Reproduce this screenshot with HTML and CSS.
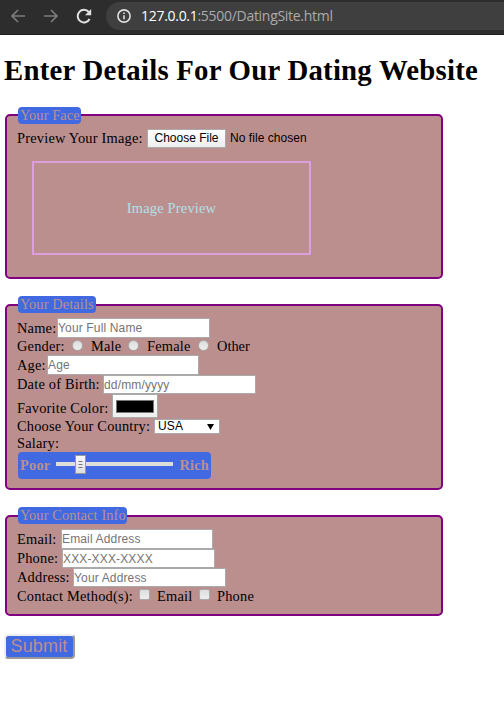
FILE: index.html
```html
<!DOCTYPE html>
<html lang="en">
<head>
<meta charset="utf-8">
<title>Dating Site</title>
<link rel="stylesheet" href="styles.css">
</head>
<body>
<header class="toolbar">
  <svg class="nav dim" viewBox="0 0 16 16"><path d="M15 8H2M8 2L2 8l6 6"/></svg>
  <svg class="nav dim" viewBox="0 0 16 16"><path d="M1 8h13M8 2l6 6-6 6"/></svg>
  <svg class="nav" viewBox="0 0 16 16"><path d="M13.6 11A6.3 6.3 0 1 1 12.8 4"/><path class="solid" d="M15.2 1v6.2H9z"/></svg>
  <div class="address">
    <svg class="info" viewBox="0 0 14 14"><circle cx="7" cy="7" r="6.1"/><path d="M7 6.2v4M7 3.4v1.6"/></svg>
    <span class="url"><b>127.0.0.1</b>:5500/DatingSite.html</span>
  </div>
</header>
<main>
  <h1>Enter Details For Our Dating Website</h1>
  <form>
    <section class="group face">
      <h2 class="legend w-face">Your Face</h2>
      <div class="row file"><span class="label l-file">Preview Your Image:</span><button type="button" class="choose">Choose File</button><span class="nofile">No file chosen</span></div>
      <div class="preview">Image Preview</div>
    </section>
    <section class="group details">
      <h2 class="legend w-details">Your Details</h2>
      <div class="row tall"><label class="label l-name">Name:</label><input class="text" placeholder="Your Full Name"></div>
      <div class="row short"><span class="label l-gender">Gender:</span><input type="radio" class="radio"><span class="label l-male">Male</span><input type="radio" class="radio"><span class="label l-female">Female</span><input type="radio" class="radio"><span class="other">Other</span></div>
      <div class="row tall"><label class="label l-age">Age:</label><input class="text narrow" placeholder="Age"></div>
      <div class="row field"><label class="label l-dob">Date of Birth:</label><input class="text" placeholder="dd/mm/yyyy"></div>
      <div class="row color"><label class="label l-color">Favorite Color:</label><span class="well"><i class="swatch"></i></span></div>
      <div class="row short"><label class="label l-country">Choose Your Country:</label><span class="select">USA<svg viewBox="0 0 8 7"><path d="M0 0h8L4 7z"/></svg></span></div>
      <div class="row short">Salary:</div>
      <div class="salary"><span>Poor</span><span class="track"><i class="thumb"><svg viewBox="0 0 9 17"><path d="M2.5 5.5h4M2.5 8.5h4M2.5 11.5h4"/></svg></i></span><span>Rich</span></div>
    </section>
    <section class="group contact">
      <h2 class="legend w-contact">Your Contact Info</h2>
      <div class="row tall"><label class="label l-email">Email:</label><input class="text narrow" placeholder="Email Address"></div>
      <div class="row field"><label class="label l-phone">Phone:</label><input class="text" placeholder="XXX-XXX-XXXX"></div>
      <div class="row field"><label class="label l-address">Address:</label><input class="text" placeholder="Your Address"></div>
      <div class="row methods"><span class="label l-method">Contact Method(s):</span><input type="checkbox" class="check"><span class="label l-cemail">Email</span><input type="checkbox" class="check"><span>Phone</span></div>
    </section>
    <button type="button" class="submit">Submit</button>
  </form>
</main>
</body>
</html>
```
FILE: styles.css
```css
* { box-sizing: border-box; }
body {
  margin: 0;
  background: #fff;
  color: #000;
  font: 14.4px/17px "Liberation Serif", serif;
  overflow: hidden;
}
.toolbar {
  height: 35px;
  display: flex;
  align-items: flex-start;
  padding: 2px 0 0 10px;
  background: #2d2d2d;
  border-bottom: 1px solid #1c1c1c;
}
.nav {
  width: 16px;
  height: 16px;
  margin: 6px 17px 0 0;
  fill: none;
  stroke: #e2e2e2;
  stroke-width: 2;
  flex: none;
}
.nav.dim { stroke: #7c7c7c; stroke-width: 1.7; }
.nav .solid { fill: #e2e2e2; stroke: none; }
.address {
  flex: 1;
  height: 28px;
  margin-left: -3px;
  display: flex;
  align-items: center;
  padding-left: 11px;
  background: #3f3f3f;
  border-radius: 14px 0 0 14px;
}
.info { width: 14px; height: 14px; fill: none; stroke: #dedede; stroke-width: 1.6; }
.url {
  margin-left: 10px;
  font: 14px/20px "Open Sans", sans-serif;
  letter-spacing: -0.29px;
  color: #ababab;
  white-space: nowrap;
}
.url b { font-weight: 400; color: #fff; }
main { padding: 0 4px; }
h1 {
  margin: 19px 0 0;
  font-size: 28.8px;
  line-height: 33px;
  font-weight: 700;
  letter-spacing: 0.23px;
  white-space: nowrap;
}
.group {
  width: 438px;
  margin-left: 1px;
  padding: 0 11px;
  border: 2px solid purple;
  border-radius: 5px;
  background: rosybrown;
}
.face { height: 165px; margin-top: 27px; }
.details { height: 186px; margin-top: 25px; }
.contact { height: 101px; margin-top: 25px; }
.legend {
  height: 17px;
  margin: -10px 0 5px;
  padding-left: 2px;
  font-size: 14.4px;
  line-height: 17px;
  font-weight: 400;
  letter-spacing: 0.1px;
  color: rosybrown;
  background: royalblue;
  border-radius: 4px;
  white-space: nowrap;
}
.face .legend { margin-top: -9px; }
.w-face { width: 63px; }
.w-details { width: 78px; }
.w-contact { width: 109px; }
.row { display: flex; align-items: center; margin-left: -1px; white-space: nowrap; letter-spacing: 0.2px; }
.tall { height: 20px; }
.field { height: 19px; }
.short { height: 17px; }
.methods { height: 18px; }
.color { height: 24px; }
.label { flex: none; }
.l-file { width: 130px; }
.l-name { width: 40px; }
.l-gender { width: 55px; }
.l-male { width: 37px; }
.l-female { width: 51px; }
.other { letter-spacing: 0; }
.l-age { width: 30px; }
.l-dob { width: 86px; }
.l-color { width: 95px; padding-top: 4px; }
.l-country { width: 137px; }
.l-email { width: 44px; }
.l-phone { width: 45px; }
.l-address { width: 56px; }
.l-method { width: 122px; }
.l-cemail { width: 42px; }
.file { height: 19px; margin-bottom: 13px; }
.choose {
  width: 79px;
  height: 19px;
  padding: 0;
  font: 12px/15px "Liberation Sans", sans-serif;
  color: #000;
  background: linear-gradient(#fff, #eee);
  border: 1px solid #aaa;
}
.nofile { margin-left: 4px; font: 12px/15px "Liberation Sans", sans-serif; letter-spacing: 0.05px; }
.preview {
  width: 279px;
  height: 94px;
  margin-left: 14px;
  border: 2px solid plum;
  color: powderblue;
  text-align: center;
  line-height: 91px;
  letter-spacing: 0.2px;
}
.text {
  appearance: none;
  width: 153px;
  height: 100%;
  margin: 0;
  padding: 0;
  border: 1px solid #aaa;
  border-radius: 0;
  background: #fff;
  font: 12px/15px "Liberation Sans", sans-serif;
  letter-spacing: 0.15px;
}
.narrow { width: 152px; }
.text::placeholder { color: #757575; opacity: 1; }
.radio, .check {
  appearance: none;
  flex: none;
  width: 11px;
  height: 11px;
  margin: 0 8px 3px 0;
  border: 1px solid #aaa;
  background: linear-gradient(#ddd, #eee);
}
.radio { border-radius: 50%; }
.check { border-radius: 2px; margin-right: 7px; }
.well {
  width: 46px;
  height: 24px;
  display: grid;
  place-items: center;
  background: linear-gradient(#fff, #eee);
  border: 1px solid #aaa;
}
.swatch { width: 38px; height: 13px; background: #000; border: 1px solid #777; }
.select {
  width: 66px;
  height: 15px;
  display: flex;
  align-items: center;
  justify-content: space-between;
  padding: 0 5px 0 3px;
  background: #fff;
  border: 1px solid #aaa;
  font: 12px/13px "Liberation Sans", sans-serif;
}
.select svg { width: 7px; height: 6px; }
.salary {
  width: 193px;
  height: 27px;
  display: flex;
  align-items: center;
  justify-content: space-between;
  padding: 0 2px;
  background: royalblue;
  border-radius: 4px;
  color: rosybrown;
  font-weight: 700;
  letter-spacing: 0.2px;
}
.track { width: 117px; height: 4px; margin-top: -3px; background: #e0dcd8; }
.thumb {
  display: block;
  width: 11px;
  height: 19px;
  margin: -7px 0 0 19px;
  background: linear-gradient(#fafafa, #ddd);
  border: 1px solid #999;
}
.thumb svg { display: block; width: 9px; height: 17px; fill: none; stroke: #777; }
.submit {
  display: block;
  width: 71px;
  height: 25px;
  margin-top: 18px;
  padding: 0 1px 1px 0;
  font: 18px/20px "Liberation Sans", sans-serif;
  letter-spacing: 0.15px;
  color: rosybrown;
  background: royalblue;
  border: 2px outset #eee;
  border-radius: 4px;
}
```
